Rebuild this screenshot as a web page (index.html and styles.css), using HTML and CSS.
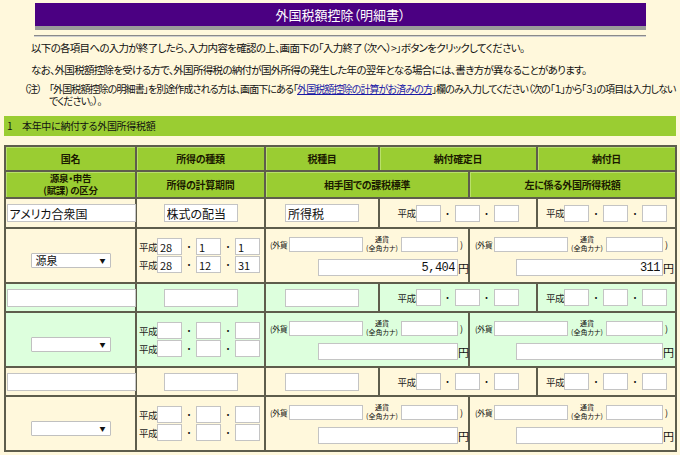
FILE: index.html
```html
<!DOCTYPE html>
<html lang="ja">
<head>
<meta charset="utf-8">
<title>外国税額控除（明細書）</title>
<link rel="stylesheet" href="styles.css">
</head>
<body>
<div class="page">
  <div class="titlebar">外国税額控除（明細書）</div>
  <div class="rule"></div>
  <p class="intro l1">以下の各項目への入力が終了したら、入力内容を確認の上、画面下の「入力終了（次へ）&gt;」ボタンをクリックしてください。</p>
  <p class="intro l2">なお、外国税額控除を受ける方で、外国所得税の納付が国外所得の発生した年の翌年となる場合には、書き方が異なることがあります。</p>
  <div class="note"><span class="note-mark">（注）</span><p class="note-body">「外国税額控除の明細書」を別途作成される方は、画面下にある「<a href="#" class="lnk">外国税額控除の計算がお済みの方</a>」欄のみ入力してください（次の「１」から「３」の項目は入力しないでください。）。</p></div>
  <div class="section">1　本年中に納付する外国所得税額</div>

  <div class="grid">
    <div class="h">国名</div>
    <div class="h">所得の種類</div>
    <div class="h">税種目</div>
    <div class="h s2">納付確定日</div>
    <div class="h">納付日</div>

    <div class="h h2">源泉・申告<br>(賦課) の区分</div>
    <div class="h">所得の計算期間</div>
    <div class="h s2">相手国での課税標準</div>
    <div class="h s2">左に係る外国所得税額</div>

    <!-- group 1 -->
    <div class="c cell"><input class="in-name" value="アメリカ合衆国"></div>
    <div class="c cell"><input class="in-mid" value="株式の配当"></div>
    <div class="c cell"><input class="in-mid" value="所得税"></div>
    <div class="c cell s2"><div class="date"><span class="era">平成</span><input class="d"><span class="dot">・</span><input class="d"><span class="dot">・</span><input class="d"></div></div>
    <div class="c cell"><div class="date"><span class="era">平成</span><input class="d"><span class="dot">・</span><input class="d"><span class="dot">・</span><input class="d"></div></div>

    <div class="c cell"><div class="sel"><span>源泉</span><span class="arr">▼</span></div></div>
    <div class="c period">
      <div class="date"><span class="era">平成</span><input class="d" value="28"><span class="dot">・</span><input class="d" value="1"><span class="dot">・</span><input class="d" value="1"></div>
      <div class="date"><span class="era">平成</span><input class="d" value="28"><span class="dot">・</span><input class="d" value="12"><span class="dot">・</span><input class="d" value="31"></div>
    </div>
    <div class="c fx s2 fx-l">
      <div class="fx-top"><span class="gaika">(外貨</span><input class="in-a"><span class="tsuka"><span>通貨</span><span>(全角カナ)</span></span><input class="in-b"><span class="paren">)</span></div>
      <div class="fx-bot"><input class="amt amt-l" value="5,404"><span class="yen">円</span></div>
    </div>
    <div class="c fx s2 fx-r">
      <div class="fx-top"><span class="gaika">(外貨</span><input class="in-a"><span class="tsuka"><span>通貨</span><span>(全角カナ)</span></span><input class="in-b"><span class="paren">)</span></div>
      <div class="fx-bot"><input class="amt amt-r" value="311"><span class="yen">円</span></div>
    </div>

    <!-- group 2 -->
    <div class="g cell"><input class="in-name"></div>
    <div class="g cell"><input class="in-mid"></div>
    <div class="g cell"><input class="in-mid"></div>
    <div class="g cell s2"><div class="date"><span class="era">平成</span><input class="d"><span class="dot">・</span><input class="d"><span class="dot">・</span><input class="d"></div></div>
    <div class="g cell"><div class="date"><span class="era">平成</span><input class="d"><span class="dot">・</span><input class="d"><span class="dot">・</span><input class="d"></div></div>

    <div class="g cell"><div class="sel"><span></span><span class="arr">▼</span></div></div>
    <div class="g period">
      <div class="date"><span class="era">平成</span><input class="d"><span class="dot">・</span><input class="d"><span class="dot">・</span><input class="d"></div>
      <div class="date"><span class="era">平成</span><input class="d"><span class="dot">・</span><input class="d"><span class="dot">・</span><input class="d"></div>
    </div>
    <div class="g fx s2 fx-l">
      <div class="fx-top"><span class="gaika">(外貨</span><input class="in-a"><span class="tsuka"><span>通貨</span><span>(全角カナ)</span></span><input class="in-b"><span class="paren">)</span></div>
      <div class="fx-bot"><input class="amt amt-l"><span class="yen">円</span></div>
    </div>
    <div class="g fx s2 fx-r">
      <div class="fx-top"><span class="gaika">(外貨</span><input class="in-a"><span class="tsuka"><span>通貨</span><span>(全角カナ)</span></span><input class="in-b"><span class="paren">)</span></div>
      <div class="fx-bot"><input class="amt amt-r"><span class="yen">円</span></div>
    </div>

    <!-- group 3 -->
    <div class="c cell"><input class="in-name"></div>
    <div class="c cell"><input class="in-mid"></div>
    <div class="c cell"><input class="in-mid"></div>
    <div class="c cell s2"><div class="date"><span class="era">平成</span><input class="d"><span class="dot">・</span><input class="d"><span class="dot">・</span><input class="d"></div></div>
    <div class="c cell"><div class="date"><span class="era">平成</span><input class="d"><span class="dot">・</span><input class="d"><span class="dot">・</span><input class="d"></div></div>

    <div class="c cell"><div class="sel"><span></span><span class="arr">▼</span></div></div>
    <div class="c period">
      <div class="date"><span class="era">平成</span><input class="d"><span class="dot">・</span><input class="d"><span class="dot">・</span><input class="d"></div>
      <div class="date"><span class="era">平成</span><input class="d"><span class="dot">・</span><input class="d"><span class="dot">・</span><input class="d"></div>
    </div>
    <div class="c fx s2 fx-l">
      <div class="fx-top"><span class="gaika">(外貨</span><input class="in-a"><span class="tsuka"><span>通貨</span><span>(全角カナ)</span></span><input class="in-b"><span class="paren">)</span></div>
      <div class="fx-bot"><input class="amt amt-l"><span class="yen">円</span></div>
    </div>
    <div class="c fx s2 fx-r">
      <div class="fx-top"><span class="gaika">(外貨</span><input class="in-a"><span class="tsuka"><span>通貨</span><span>(全角カナ)</span></span><input class="in-b"><span class="paren">)</span></div>
      <div class="fx-bot"><input class="amt amt-r"><span class="yen">円</span></div>
    </div>
  </div>
</div>
</body>
</html>
```

FILE: styles.css
```css
html, body {
  margin: 0;
  padding: 0;
  background: #fff8dc;
}
body {
  font-family: "Noto Sans CJK JP", "Noto Sans", sans-serif;
  font-feature-settings: "palt";
  color: #111;
}
.page {
  padding-top: 3px;
  width: 680px;
}
.titlebar {
  margin: 0 34px 0 35px;
  height: 23px;
  line-height: 23px;
  background: #4b0082;
  color: #fff;
  text-align: center;
  font-size: 13px;
  border-bottom: 4px solid #9a9a9a;
}
.rule {
  margin: 5px 34px 0 34px;
  border-top: 1px solid #8a8a8a;
  border-bottom: 1px solid #cfcfcf;
}
.intro {
  margin: 0;
  font-size: 10.5px;
  letter-spacing: -0.7px;
  line-height: 12px;
  padding-left: 31px;
  white-space: nowrap;
}
.l1 { margin-top: 5px; }
.l2 { margin-top: 10px; }
.note {
  display: flex;
  margin-top: 7px;
  padding-left: 24px;
  font-size: 10px;
  letter-spacing: -0.9px;
  line-height: 12px;
}
.note-mark {
  width: 25px;
  flex: none;
  white-space: nowrap;
}
.note-body {
  margin: 0;
  width: 628px;
}
.lnk {
  color: #1a1aa6;
  text-decoration: underline;
}
.section {
  margin: 9px 4px 0 4px;
  height: 20px;
  line-height: 20px;
  background: #9acd32;
  font-size: 10px;
  letter-spacing: -0.3px;
  padding-left: 3px;
}
.grid {
  display: grid;
  grid-template-columns: 129px 127px 112px 88px 66px 137px;
  grid-template-rows: 23px 25px 28px 53px 27px 53px 27px 53px;
  gap: 2px;
  padding: 2px;
  background: #5e5d4c;
  margin: 9px 0 0 4px;
  width: max-content;
}
.h {
  background: #9acd32;
  display: flex;
  align-items: center;
  justify-content: center;
  text-align: center;
  font-size: 10px;
  letter-spacing: -0.3px;
  font-weight: bold;
  line-height: 12px;
  color: #1a1a00;
  box-shadow: inset 1px 1px 0 #b9e06a;
}
.h2 { line-height: 11.5px; font-size: 9.5px; }
.s2 { grid-column: span 2; }
.c { background: #fff8dc; }
.g { background: #ddffdd; }
.cell {
  display: flex;
  align-items: center;
  justify-content: center;
}
input {
  font-family: "Noto Sans CJK JP", sans-serif;
  font-feature-settings: "palt";
  font-size: 11px;
  color: #111;
  background: #fff;
  border: 1px solid #c4c4c4;
  box-sizing: border-box;
  height: 17px;
  padding: 0 2px;
  margin: 0;
  outline: none;
  flex: none;
}
.in-name { width: 129px; height: 18px; margin-left: 1px; font-size: 12px; }
.in-mid { width: 74px; height: 18px; font-size: 12px; }
.date {
  display: flex;
  align-items: center;
  flex: none;
}
.era {
  width: 18px;
  flex: none;
  white-space: nowrap;
  font-size: 9.5px;
  letter-spacing: -0.5px;
  color: #222;
}
.d { width: 25px; }
.dot {
  width: 14px;
  flex: none;
  text-align: center;
  font-size: 9px;
}
.period {
  display: flex;
  flex-direction: column;
  justify-content: center;
  gap: 1px;
  padding-left: 2px;
}
.sel {
  width: 80px;
  height: 15px;
  margin-top: 9px;
  box-sizing: border-box;
  border: 1px solid #c0c0c0;
  border-radius: 1px;
  background: #fff;
  display: flex;
  align-items: center;
  justify-content: space-between;
  padding: 0 4px 0 4px;
  font-size: 11px;
}
.arr {
  font-size: 6px;
  color: #111;
}
.fx {
  display: flex;
  flex-direction: column;
  justify-content: center;
  gap: 6px;
}
.fx-top {
  display: flex;
  align-items: center;
}
.fx-l .fx-top { padding-left: 4px; }
.fx-r .fx-top { padding-left: 5px; }
.gaika {
  width: 19px;
  flex: none;
  white-space: nowrap;
  font-size: 8px;
  letter-spacing: -0.5px;
}
.in-a { width: 74px; height: 15px; }
.in-b { width: 57px; height: 15px; }
.tsuka {
  width: 38px;
  flex: none;
  display: flex;
  flex-direction: column;
  align-items: center;
  font-size: 7px;
  line-height: 9px;
  white-space: nowrap;
}
.paren {
  font-size: 9px;
  margin-left: 2px;
}
.fx-bot {
  display: flex;
  justify-content: flex-end;
  align-items: center;
}
.fx-r .fx-bot { padding-right: 2px; }
.amt {
  text-align: right;
  font-size: 12px;
  font-family: "Liberation Mono", monospace;
  letter-spacing: -0.5px;
}
.amt-l { width: 140px; }
.amt-r { width: 147px; }
.yen {
  width: 10px;
  flex: none;
  font-size: 11px;
}
```
